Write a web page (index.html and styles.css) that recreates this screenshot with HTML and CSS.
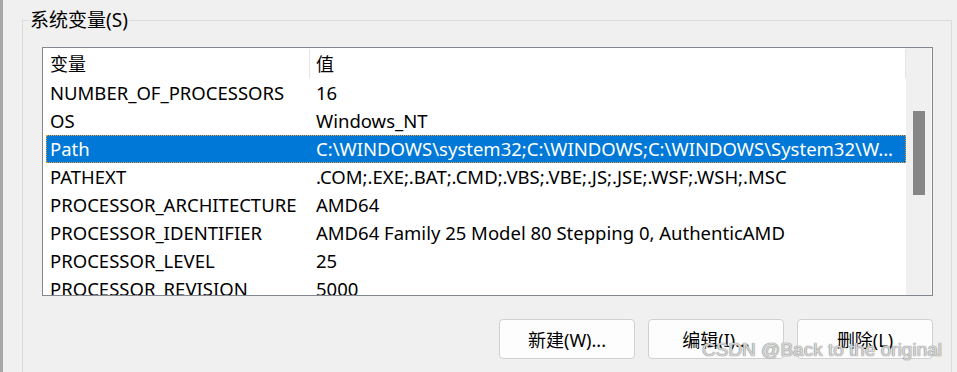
FILE: index.html
```html
<!DOCTYPE html>
<html lang="zh-CN">
<head>
    <meta charset="UTF-8">
    <title>系统变量</title>
    <link rel="stylesheet" href="styles.css">
</head>
<body>
    <div class="window">
        <fieldset class="group">
            <legend>系统变量(S)</legend>

            <div class="list-box">
                <div class="list">
                    <div class="list-header">
                        <div class="col-name">变量</div>
                        <div class="col-value">值</div>
                    </div>
                    <div class="rows" id="rows"></div>
                </div>
                <div class="scrollbar">
                    <div class="thumb"></div>
                </div>
            </div>

            <div class="buttons">
                <button class="btn">新建(W)...</button>
                <button class="btn">编辑(I)...</button>
                <button class="btn">删除(L)</button>
            </div>
        </fieldset>
        <div class="watermark">CSDN @Back to the original</div>
    </div>

    <script>
        const vars = [
            ["NUMBER_OF_PROCESSORS", "16"],
            ["OS", "Windows_NT"],
            ["Path", "C:\\WINDOWS\\system32;C:\\WINDOWS;C:\\WINDOWS\\System32\\W..."],
            ["PATHEXT", ".COM;.EXE;.BAT;.CMD;.VBS;.VBE;.JS;.JSE;.WSF;.WSH;.MSC"],
            ["PROCESSOR_ARCHITECTURE", "AMD64"],
            ["PROCESSOR_IDENTIFIER", "AMD64 Family 25 Model 80 Stepping 0, AuthenticAMD"],
            ["PROCESSOR_LEVEL", "25"],
            ["PROCESSOR_REVISION", "5000"]
        ];

        let rows = document.getElementById("rows");
        vars.forEach(v => {
            let selected = v[0] === "Path" ? " selected" : "";
            rows.innerHTML += `
                <div class="row${selected}">
                    <div class="col-name">${v[0]}</div>
                    <div class="col-value">${v[1]}</div>
                </div>
            `;
        });
    </script>
</body>
</html>
```

FILE: styles.css
```css
body {
    margin: 0;
    background: #f0f0f0;
    font-family: 'Noto Sans', 'Noto Sans CJK SC', sans-serif;
    color: #000;
}

.window {
    height: 372px;
    border-left: 3px solid #a7a7a7;
    overflow: hidden;
    position: relative;
}

.group {
    margin: 9px 0 0 19px;
    width: 930px;
    padding: 0 0 0 19px;
    border: 1px solid #dcdcdc;
    border-bottom: none;
    height: 400px;
    box-sizing: border-box;
}

.group legend {
    padding: 0 1px;
    margin-left: -13px;
    font-size: 19px;
    line-height: 22px;
    height: 22px;
}

.list-box {
    margin-top: 16px;
    width: 891px;
    height: 249px;
    box-sizing: border-box;
    border: 1px solid #828790;
    background: white;
    display: flex;
    overflow: hidden;
}

.list {
    width: 863px;
    flex-shrink: 0;
    overflow: hidden;
}

.list-header {
    display: flex;
    height: 31px;
    font-size: 18px;
}

.list-header .col-name,
.list-header .col-value {
    box-sizing: border-box;
    border-right: 1px solid #e5e5e5;
    margin: 1px 0;
    line-height: 31px;
}

.list-header .col-name {
    width: 267px;
    padding-left: 7px;
}

.list-header .col-value {
    flex: 1;
    padding-left: 6px;
}

.row {
    display: flex;
    height: 28px;
    line-height: 28px;
    margin-left: 3px;
    font-size: 18.5px;
    white-space: nowrap;
}

.row .col-name {
    width: 266px;
    padding-left: 4px;
    box-sizing: border-box;
}

.row .col-value {
    flex: 1;
    padding-left: 4px;
}

.row.selected {
    background: #0078d7;
    color: white;
    outline: 1px dotted #f0a030;
    outline-offset: -1px;
}

.scrollbar {
    width: 26px;
    flex-shrink: 0;
    background: #f0f0f0;
    border-right: 1px solid #fafafa;
    box-sizing: border-box;
    padding: 63px 0 0 7px;
}

.thumb {
    width: 12px;
    height: 84px;
    background: #868686;
}

.buttons {
    display: flex;
    justify-content: flex-end;
    gap: 13px;
    width: 891px;
    margin-top: 23px;
}

.btn {
    width: 136px;
    height: 40px;
    background: #fdfdfd;
    border: 1px solid #d0d0d0;
    border-radius: 4px;
    font-family: 'Noto Sans', 'Noto Sans CJK SC', sans-serif;
    font-size: 18px;
    color: #000;
    padding: 0;
}

.watermark {
    position: absolute;
    left: 699px;
    top: 339px;
    font-family: 'Liberation Sans', sans-serif;
    font-size: 19px;
    color: rgba(255, 255, 255, 0.7);
    text-shadow: 0 0 1px #777, 0 0 1px #777;
    white-space: nowrap;
}
```
